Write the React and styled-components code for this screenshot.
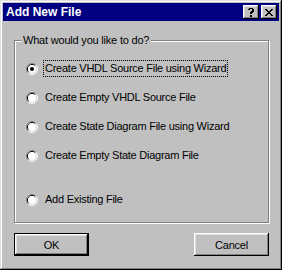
import React from "react";
import { useState } from "react";
import styled, { createGlobalStyle } from "styled-components";

const GlobalStyle = createGlobalStyle`
  html, body {
    margin: 0;
    padding: 0;
    background: #c0c0c0;
  }
  body {
    font-family: "Liberation Sans", Arial, sans-serif;
    font-size: 11px;
  }
`;

const Window = styled.div`
  width: 282px;
  height: 270px;
  box-sizing: border-box;
  padding: 3px;
  background: #c0c0c0;
  box-shadow: inset -1px -1px 0 #000, inset 1px 1px 0 #dfdfdf,
    inset -2px -2px 0 #808080, inset 2px 2px 0 #fff;
  display: flex;
  flex-direction: column;
`;

const TitleBar = styled.div`
  height: 18px;
  background: #000080;
  color: #fff;
  display: flex;
  align-items: center;
  justify-content: space-between;
  padding: 0 2px 0 3px;
`;

const Title = styled.span`
  font-weight: bold;
  font-size: 12px;
`;

const CaptionButtons = styled.div`
  display: flex;
  gap: 2px;
`;

const CaptionButton = styled.div`
  width: 16px;
  height: 14px;
  box-sizing: border-box;
  background: #c0c0c0;
  box-shadow: inset -1px -1px 0 #000, inset 1px 1px 0 #fff,
    inset -2px -2px 0 #808080, inset 2px 2px 0 #dfdfdf;
  display: flex;
  align-items: center;
  justify-content: center;
  color: #000;
`;

const Body = styled.div`
  padding: 0 10px 0 11px;
  display: flex;
  flex-direction: column;
`;

const Group = styled.div`
  position: relative;
  margin-top: 19px;
  height: 183px;
  box-sizing: border-box;
  border: 1px solid #808080;
  box-shadow: 1px 1px 0 #fff, inset 1px 1px 0 #fff;
  padding: 13px 0 0 11px;
  display: flex;
  flex-direction: column;
`;

const Legend = styled.span`
  position: absolute;
  top: -7px;
  left: 6px;
  padding: 0 2px;
  background: #c0c0c0;
  color: #000;
  letter-spacing: -0.2px;
  line-height: 13px;
`;

const Option = styled.label`
  height: 29px;
  display: flex;
  align-items: center;
  gap: 5px;
  color: #000;
  margin-top: ${(props) => (props.separated ? "15px" : "0")};
`;

const OptionText = styled.span`
  padding: 1px 1px;
  line-height: 13px;
  letter-spacing: -0.25px;
  border: 1px dotted ${(props) => (props.focused ? "#000" : "transparent")};
`;

const ButtonRow = styled.div`
  margin-top: 10px;
  display: flex;
  justify-content: space-between;
`;

const Button = styled.button`
  width: 75px;
  height: 23px;
  box-sizing: border-box;
  background: #c0c0c0;
  font-family: "Liberation Sans", Arial, sans-serif;
  font-size: 11px;
  letter-spacing: -0.2px;
  color: #000;
  padding: 0;
  border: ${(props) => (props.primary ? "1px solid #000" : "none")};
  box-shadow: inset -1px -1px 0 #000, inset 1px 1px 0 #fff,
    inset -2px -2px 0 #808080, inset 2px 2px 0 #dfdfdf;
`;

const Radio = ({ checked }) => (
  <svg width="12" height="12" viewBox="0 0 12 12">
    <path d="M2.11 9.89 A5.5 5.5 0 0 1 9.89 2.11" stroke="#808080" fill="none" />
    <path d="M9.89 2.11 A5.5 5.5 0 0 1 2.11 9.89" stroke="#fff" fill="none" />
    <path d="M2.82 9.18 A4.5 4.5 0 0 1 9.18 2.82" stroke="#000" fill="none" />
    <path d="M9.18 2.82 A4.5 4.5 0 0 1 2.82 9.18" stroke="#dfdfdf" fill="none" />
    <circle cx="6" cy="6" r="4" fill="#fff" />
    {checked && <circle cx="6" cy="6" r="2" fill="#000" />}
  </svg>
);

const options = [
  "Create VHDL Source File using Wizard",
  "Create Empty VHDL Source File",
  "Create State Diagram File using Wizard",
  "Create Empty State Diagram File",
  "Add Existing File",
];

const App = () => {
  const [selected, setSelected] = useState(0);
  return (
    <>
      <GlobalStyle />
      <Window>
        <TitleBar>
          <Title>Add New File</Title>
          <CaptionButtons>
            <CaptionButton>
              <svg width="8" height="9" viewBox="0 0 8 9">
                <path d="M1 1h1V0h4v1h1v3H6v1H5v1H3V4h1V3h1V1H3v1H1z" fill="#000" />
                <rect x="3" y="7" width="2" height="2" fill="#000" />
              </svg>
            </CaptionButton>
            <CaptionButton>
              <svg width="8" height="7" viewBox="0 0 8 7">
                <path d="M0 0h2v1h1v1h2V1h1V0h2v1H7v1H6v1H5v1h1v1h1v1h1v1H6V6H5V5H3v1H2v1H0V6h1V5h1V4h1V3H2V2H1V1H0z" fill="#000" />
              </svg>
            </CaptionButton>
          </CaptionButtons>
        </TitleBar>
        <Body>
          <Group>
            <Legend>What would you like to do?</Legend>
            {options.map((text, i) => (
              <Option key={text} separated={i === 4} onClick={() => setSelected(i)}>
                <Radio checked={selected === i} />
                <OptionText focused={selected === i}>{text}</OptionText>
              </Option>
            ))}
          </Group>
          <ButtonRow>
            <Button primary>OK</Button>
            <Button>Cancel</Button>
          </ButtonRow>
        </Body>
      </Window>
    </>
  );
};

export default App;
